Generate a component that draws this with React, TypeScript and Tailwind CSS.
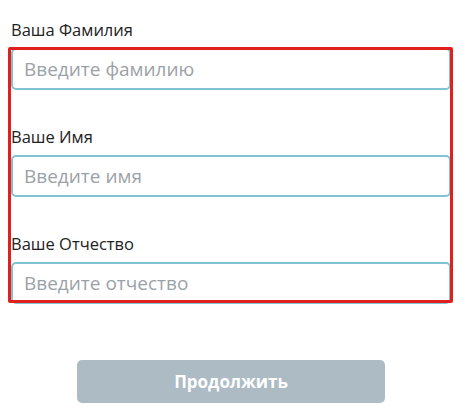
import React from "react";

export default function App() {
  const fields = [
    { label: "Ваша Фамилия", placeholder: "Введите фамилию" },
    { label: "Ваше Имя", placeholder: "Введите имя" },
    { label: "Ваше Отчество", placeholder: "Введите отчество" },
  ];
  return (
    <div
      className="w-[471px] h-[419px] bg-white pl-[11px] pt-[18px]"
      style={{ fontFamily: '"Open Sans", "Noto Sans", sans-serif' }}
    >
      <div className="relative w-[440px]">
        <div className="flex flex-col gap-[35px]">
          {fields.map((f) => (
            <div key={f.label} className="flex flex-col">
              <label className="text-[16.5px] leading-[24px] text-[#222] mb-[6px]">{f.label}</label>
              <input
                className="h-[42px] w-full rounded-[5px] border-2 border-[#80c3d3] pl-[11px] text-[19px] text-[#333] outline-none placeholder:text-[#9ba2a7]"
                placeholder={f.placeholder}
                style={{ fontFamily: '"Open Sans", "Noto Sans", sans-serif' }}
              />
            </div>
          ))}
        </div>
        <div className="pointer-events-none absolute left-[-3px] top-[29px] w-[445px] h-[256px] border-[3px] border-[#e01f1f] rounded-[2px]" />
        <div className="mt-[56px] flex justify-center">
          <button className="w-[308px] h-[43px] rounded-[5px] bg-[#adbbc4] text-white text-[17px] font-bold">
            Продолжить
          </button>
        </div>
      </div>
    </div>
  );
}
